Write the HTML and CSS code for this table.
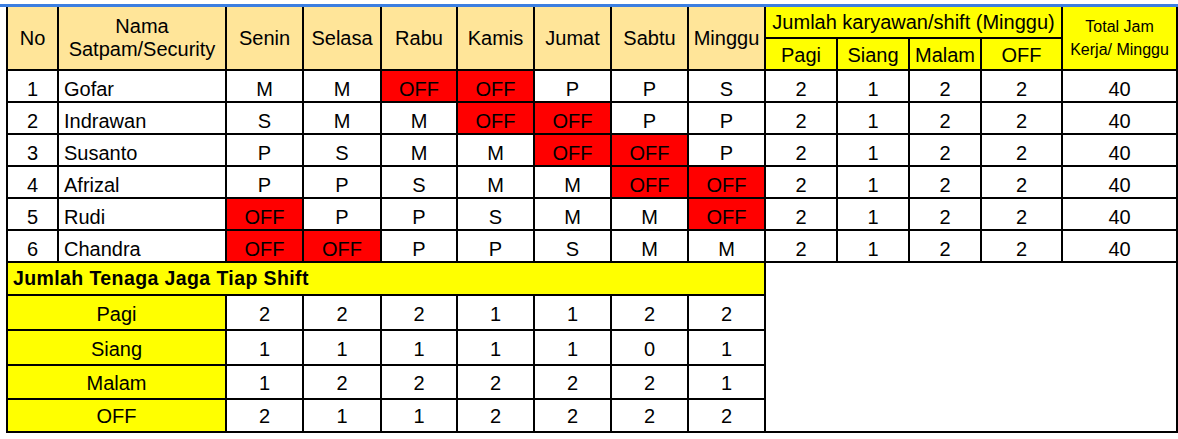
FILE: index.html
```html
<!DOCTYPE html>
<html lang="id">
<head>
<meta charset="utf-8">
<title>Jadwal Satpam</title>
<link rel="stylesheet" href="styles.css">
</head>
<body>
<div class="topline"></div>
<div class="wrap">
<table class="sheet">
  <colgroup>
    <col class="c-no"><col class="c-nama">
    <col class="c-d1"><col class="c-d2"><col class="c-d3"><col class="c-d4"><col class="c-d5"><col class="c-d6"><col class="c-d7">
    <col class="c-s"><col class="c-s"><col class="c-s"><col class="c-off"><col class="c-total">
  </colgroup>
  <thead>
    <tr class="h1">
      <th rowspan="2" class="hd">No</th>
      <th rowspan="2" class="hd">Nama<br>Satpam/Security</th>
      <th rowspan="2" class="hd">Senin</th>
      <th rowspan="2" class="hd">Selasa</th>
      <th rowspan="2" class="hd">Rabu</th>
      <th rowspan="2" class="hd">Kamis</th>
      <th rowspan="2" class="hd">Jumat</th>
      <th rowspan="2" class="hd">Sabtu</th>
      <th rowspan="2" class="hd">Minggu</th>
      <th colspan="4" class="yl">Jumlah karyawan/shift (Minggu)</th>
      <th rowspan="2" class="yl total">Total Jam<br>Kerja/ Minggu</th>
    </tr>
    <tr class="h2">
      <th class="yl">Pagi</th>
      <th class="yl">Siang</th>
      <th class="yl">Malam</th>
      <th class="yl">OFF</th>
    </tr>
  </thead>
  <tbody>
    <tr class="dr">
      <td>1</td><td class="name">Gofar</td>
      <td>M</td><td>M</td><td class="off">OFF</td><td class="off">OFF</td><td>P</td><td>P</td><td>S</td>
      <td>2</td><td>1</td><td>2</td><td>2</td><td>40</td>
    </tr>
    <tr class="dr">
      <td>2</td><td class="name">Indrawan</td>
      <td>S</td><td>M</td><td>M</td><td class="off">OFF</td><td class="off">OFF</td><td>P</td><td>P</td>
      <td>2</td><td>1</td><td>2</td><td>2</td><td>40</td>
    </tr>
    <tr class="dr">
      <td>3</td><td class="name">Susanto</td>
      <td>P</td><td>S</td><td>M</td><td>M</td><td class="off">OFF</td><td class="off">OFF</td><td>P</td>
      <td>2</td><td>1</td><td>2</td><td>2</td><td>40</td>
    </tr>
    <tr class="dr">
      <td>4</td><td class="name">Afrizal</td>
      <td>P</td><td>P</td><td>S</td><td>M</td><td>M</td><td class="off">OFF</td><td class="off">OFF</td>
      <td>2</td><td>1</td><td>2</td><td>2</td><td>40</td>
    </tr>
    <tr class="dr">
      <td>5</td><td class="name">Rudi</td>
      <td class="off">OFF</td><td>P</td><td>P</td><td>S</td><td>M</td><td>M</td><td class="off">OFF</td>
      <td>2</td><td>1</td><td>2</td><td>2</td><td>40</td>
    </tr>
    <tr class="dr">
      <td>6</td><td class="name">Chandra</td>
      <td class="off">OFF</td><td class="off">OFF</td><td>P</td><td>P</td><td>S</td><td>M</td><td>M</td>
      <td>2</td><td>1</td><td>2</td><td>2</td><td>40</td>
    </tr>
    <tr class="sumhead">
      <td colspan="9" class="yl title">Jumlah Tenaga Jaga Tiap Shift</td>
      <td colspan="5" rowspan="5" class="blank"></td>
    </tr>
    <tr class="sr r-pagi">
      <td colspan="2" class="yl">Pagi</td>
      <td>2</td><td>2</td><td>2</td><td>1</td><td>1</td><td>2</td><td>2</td>
    </tr>
    <tr class="sr r-siang">
      <td colspan="2" class="yl">Siang</td>
      <td>1</td><td>1</td><td>1</td><td>1</td><td>1</td><td>0</td><td>1</td>
    </tr>
    <tr class="sr r-malam">
      <td colspan="2" class="yl">Malam</td>
      <td>1</td><td>2</td><td>2</td><td>2</td><td>2</td><td>2</td><td>1</td>
    </tr>
    <tr class="sr r-off">
      <td colspan="2" class="yl">OFF</td>
      <td>2</td><td>1</td><td>1</td><td>2</td><td>2</td><td>2</td><td>2</td>
    </tr>
  </tbody>
</table>
</div>
</body>
</html>
```
FILE: styles.css
```css
html, body {
  margin: 0;
  padding: 0;
  background: #ffffff;
}

body {
  font-family: "Liberation Sans", Arial, sans-serif;
  color: #000;
}

.topline {
  margin-top: 4px;
  height: 3px;
  background: #3c7ee0;
}

.wrap {
  padding-left: 6px;
}

.sheet {
  border-collapse: collapse;
  table-layout: fixed;
  width: 1172px;
  font-size: 20px;
}

.c-no { width: 51px; }
.c-nama { width: 168px; }
.c-d1 { width: 77px; }
.c-d2 { width: 78px; }
.c-d3 { width: 76px; }
.c-d4, .c-d5, .c-d6, .c-d7 { width: 77px; }
.c-s { width: 72px; }
.c-off { width: 81px; }
.c-total { width: 115px; }

.sheet th,
.sheet td {
  border: 2px solid #000;
  padding: 0 2px;
  text-align: center;
  font-weight: normal;
  line-height: 23px;
  white-space: nowrap;
  overflow: hidden;
}

.sheet thead tr.h1 th {
  border-top: none;
}

.hd {
  background: #ffe599;
  vertical-align: middle;
}

.yl {
  background: #ffff00;
}

.h1 {
  height: 31px;
}

.h2 {
  height: 32px;
}

.h1 th.yl {
  vertical-align: middle;
}

.h2 th {
  vertical-align: bottom;
  padding-bottom: 2px;
}

.total {
  font-size: 16px;
  line-height: 20px;
  vertical-align: middle;
  padding-bottom: 4px;
}

.dr {
  height: 32px;
}

.dr td {
  vertical-align: bottom;
}

.sheet td.name {
  text-align: left;
  padding-left: 5px;
}

.off {
  background: #ff0000;
}

.sumhead {
  height: 33px;
}

.sheet td.title {
  text-align: left;
  padding-left: 5px;
  font-weight: bold;
  font-size: 19.5px;
  letter-spacing: 0.4px;
  vertical-align: middle;
}

.blank {
  background: #fff;
}

.sr td {
  vertical-align: bottom;
  padding-bottom: 3px;
}

.r-pagi { height: 35px; }
.r-siang { height: 35px; }
.r-malam { height: 34px; }
.r-off { height: 33px; }
```
